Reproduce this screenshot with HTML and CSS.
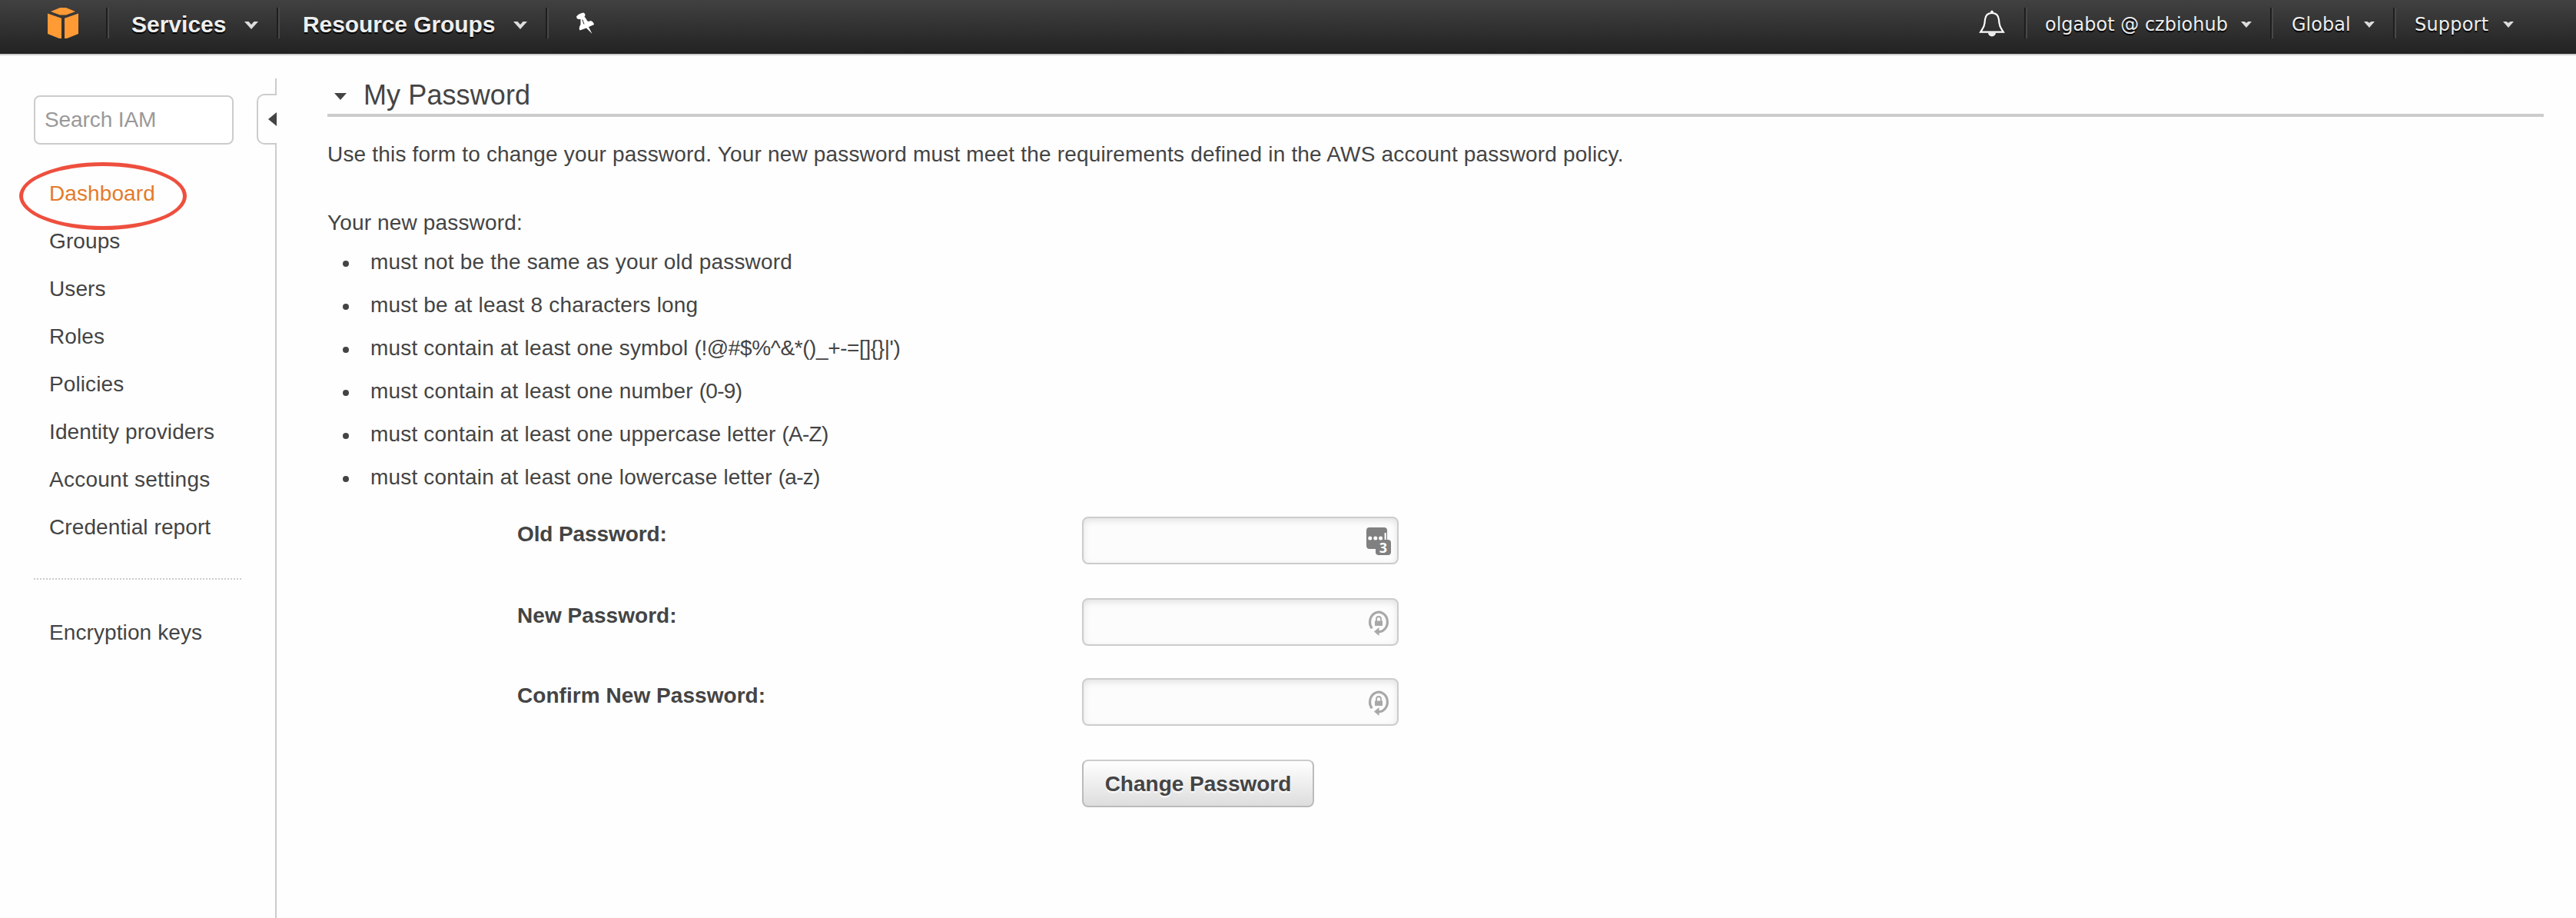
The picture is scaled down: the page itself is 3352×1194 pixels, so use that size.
FILE: index.html
```
<!DOCTYPE html>
<html lang="en">
<head>
<meta charset="utf-8">
<title>IAM Management Console</title>
<link rel="stylesheet" href="styles.css">
</head>
<body>
<header class="nav">
  <a class="nav-logo">
    <svg width="40" height="40" viewBox="0 0 40 40" fill="#ff9a35"><path d="M16 0h8l12 5-12 4.600h-8L4 5z"/><path d="M0 7.500l18 6.200V40h-3L0 34z"/><path d="M40 7.500l-18 6.200V40h3l15-6z"/></svg>
  </a>
  <i class="nav-sep"></i>
  <a class="nav-item nav-services">Services<svg class="caret" width="18" height="10" viewBox="0 0 18 10"><path d="M0 0h5.500l3.500 4 3.500-4H18L9 10z"/></svg></a>
  <i class="nav-sep"></i>
  <a class="nav-item nav-groups">Resource Groups<svg class="caret" width="18" height="10" viewBox="0 0 18 10"><path d="M0 0h5.500l3.500 4 3.500-4H18L9 10z"/></svg></a>
  <i class="nav-sep"></i>
  <a class="nav-pin">
    <svg width="26" height="28" viewBox="0 0 26 28" fill="#fff"><path d="M1 5.500Q4 1.500 10 .500Q12.500 1 12.500 4L11.500 5.500L16 12L20 11Q23.500 12.500 24 16L17 19L21.500 28L14 20.500L5.500 23.500Q3.500 20 6.500 16L6.500 9L3.500 9Q1 8 1 5.500z"/><path d="M8.800 9.500l2.200 6" stroke="#333" stroke-width="1"/></svg>
  </a>
  <a class="nav-bell">
    <svg width="34" height="36" viewBox="0 0 34 36" fill="none" stroke="#fff" stroke-width="2.200"><path d="M17 4C11.500 4 8.500 7.500 8 12.500C7.500 20 6.500 22 2.200 28.600H31.800C27.500 22 26.500 20 26 12.500C25.500 7.500 22.500 4 17 4z"/><path d="M15.500 3a1.500 2 0 0 1 3 0z" fill="#fff" stroke-width="1"/><path d="M12 29.500a5 5 0 0 0 10 0z" fill="#eee" stroke="none"/></svg>
  </a>
  <i class="nav-sep"></i>
  <a class="nav-item nav-small nav-user">olgabot @ czbiohub<svg class="caret" width="14" height="8" viewBox="0 0 14 8"><path d="M0 0h4.500L7 1.800 9.500 0H14L7 8z"/></svg></a>
  <i class="nav-sep"></i>
  <a class="nav-item nav-small nav-region">Global<svg class="caret" width="14" height="8" viewBox="0 0 14 8"><path d="M0 0h4.500L7 1.800 9.500 0H14L7 8z"/></svg></a>
  <i class="nav-sep"></i>
  <a class="nav-item nav-small nav-support">Support<svg class="caret" width="14" height="8" viewBox="0 0 14 8"><path d="M0 0h4.500L7 1.800 9.500 0H14L7 8z"/></svg></a>
</header>
<div class="page">
  <aside class="sidebar">
    <div class="sidebar-body">
      <input class="search" type="text" placeholder="Search IAM">
      <nav class="menu">
        <a class="menu-item active">Dashboard<span class="ring"></span></a>
        <a class="menu-item">Groups</a>
        <a class="menu-item">Users</a>
        <a class="menu-item">Roles</a>
        <a class="menu-item">Policies</a>
        <a class="menu-item">Identity providers</a>
        <a class="menu-item menu-wide">Account settings</a>
        <a class="menu-item">Credential report</a>
        <div class="menu-divider"></div>
        <a class="menu-item">Encryption keys</a>
      </nav>
    </div>
    <div class="rail">
      <div class="rail-top"></div>
      <div class="toggle"><svg width="11" height="18" viewBox="0 0 11 18"><path d="M11 0v18L0 9z" fill="#444"/></svg></div>
      <div class="rail-bottom"></div>
    </div>
  </aside>
  <main class="main">
    <h1 class="title"><svg width="16" height="9" viewBox="0 0 16 9"><path d="M0 0h16L8 9z" fill="#444"/></svg>My Password</h1>
    <p class="intro">Use this form to change your password. Your new password must meet the requirements defined in the AWS account password policy.</p>
    <p class="lead">Your new password:</p>
    <ul class="rules">
      <li>must not be the same as your old password</li>
      <li>must be at least 8 characters long</li>
      <li><span>must contain at least one symbol <span class="symbols">(!@#$%^&amp;*()_+-=[]{}|')</span></span></li>
      <li><span>must contain at least one number <span class="range">(0-9)</span></span></li>
      <li><span>must contain at least one uppercase letter <span class="range">(A-Z)</span></span></li>
      <li><span>must contain at least one lowercase letter <span class="range">(a-z)</span></span></li>
    </ul>
    <form class="form">
      <div class="row">
        <label class="label label-old">Old Password:</label>
        <div class="field">
          <svg width="32" height="36" viewBox="0 0 32 36"><path fill="#808080" d="M4 0h19a4 4 0 0 1 4 4v12h1a4 4 0 0 1 4 4v12a4 4 0 0 1-4 4H16a4 4 0 0 1-4-4v-4H4a4 4 0 0 1-4-4V4a4 4 0 0 1 4-4z"/><g fill="#fff"><circle cx="4.800" cy="14" r="2.500"/><circle cx="11.800" cy="14" r="2.500"/><circle cx="18.600" cy="14" r="2.500"/><path d="M23.600 7h2.200v9h-2.200z"/></g><text x="22" y="33" text-anchor="middle" class="badge">3</text></svg>
        </div>
      </div>
      <div class="row row-mid">
        <label class="label">New Password:</label>
        <div class="field">
          <svg width="32" height="36" viewBox="0 0 32 36"><path d="M7.300 25.300A11.400 12.800 0 1 1 16 29.800" fill="none" stroke="#a8a8a8" stroke-width="3.200"/><path d="M10 29.500l6.500-5.500v11z" fill="#a8a8a8"/><path d="M11 15.500h10V22H11z" fill="#a8a8a8"/><path d="M13 16v-3a3 3 0 0 1 6 0v3" fill="none" stroke="#a8a8a8" stroke-width="1.800"/></svg>
        </div>
      </div>
      <div class="row">
        <label class="label">Confirm New Password:</label>
        <div class="field">
          <svg width="32" height="36" viewBox="0 0 32 36"><path d="M7.300 25.300A11.400 12.800 0 1 1 16 29.800" fill="none" stroke="#a8a8a8" stroke-width="3.200"/><path d="M10 29.500l6.500-5.500v11z" fill="#a8a8a8"/><path d="M11 15.500h10V22H11z" fill="#a8a8a8"/><path d="M13 16v-3a3 3 0 0 1 6 0v3" fill="none" stroke="#a8a8a8" stroke-width="1.800"/></svg>
        </div>
      </div>
      <button class="submit" type="button">Change Password</button>
    </form>
  </main>
</div>
</body>
</html>
```
FILE: styles.css
```
* { box-sizing: border-box; }
body {
  margin: 0;
  background: #fefefe;
  color: #444;
  font: 28px/40px "Liberation Sans", Arial, sans-serif;
}
svg { display: block; flex: none; overflow: visible; }

/* Top bar */
.nav {
  display: flex;
  height: 72px;
  border-bottom: 2px solid #ccc;
  background: linear-gradient(#414141, #222);
}
.nav-logo { width: 138px; padding: 10px 0 0 62px; }
.nav-sep {
  flex: none;
  width: 4px;
  height: 40px;
  margin-top: 10px;
  background: linear-gradient(90deg, #1e1e1e 50%, #484848 50%);
}
.nav-item {
  display: flex;
  justify-content: space-between;
  padding: 0 24px 0 29px;
  color: #eee;
  font-size: 30px;
  font-weight: bold;
  line-height: 64px;
  white-space: nowrap;
  text-shadow: 0 2px 1px #000;
}
.nav-services { width: 218px; }
.nav-groups { width: 346px; padding-left: 30px; letter-spacing: -0.1px; }
.nav-small {
  padding-left: 23px;
  font: 24px/64px "DejaVu Sans", Verdana, sans-serif;
}
.nav-user { width: 316px; }
.nav-region { width: 156px; padding-left: 24px; }
.nav-support { width: 234px; padding-left: 24px; padding-right: 81px; letter-spacing: 0.2px; }
.caret { margin-top: 28px; fill: #ddd; }
.nav-pin { padding: 16px 0 0 35px; }
.nav-bell { margin-left: auto; padding: 13px 25px 0 0; }

/* Sidebar */
.page { display: flex; height: 1122px; }
.sidebar { display: flex; width: 360px; padding: 30px 0 0 44px; }
.sidebar-body { width: 290px; padding-top: 22px; }
.search {
  display: block;
  width: 260px;
  height: 64px;
  padding: 0 12px;
  border: 2px solid #ccc;
  border-radius: 8px;
  background: #fff;
  font: 28px "Liberation Sans", Arial, sans-serif;
  letter-spacing: -0.1px;
}
.search::placeholder { color: #999; opacity: 1; }
.menu { width: 270px; margin-top: 33px; }
.menu-item {
  display: block;
  position: relative;
  height: 62px;
  padding-left: 20px;
  line-height: 62px;
  letter-spacing: 0.1px;
  white-space: nowrap;
}
.menu-wide { letter-spacing: 0.25px; }
.active { color: #e47b2b; }
.ring {
  position: absolute;
  left: -19px;
  top: -10px;
  width: 218px;
  height: 88px;
  border: 5px solid #ee4f3e;
  border-radius: 50%;
}
.menu-divider {
  height: 2px;
  margin: 35px 0 38px;
  background: repeating-linear-gradient(90deg, #ccc 0 2px, transparent 2px 4px);
}
.rail { display: flex; flex-direction: column; width: 26px; }
.rail-top { height: 20px; border-right: 2px solid #ccc; }
.rail-bottom { flex: 1; border-right: 2px solid #ccc; }
.toggle {
  display: flex;
  align-items: center;
  justify-content: flex-end;
  height: 66px;
  border: 2px solid #ccc;
  border-right: 0;
  border-radius: 10px 0 0 10px;
}

/* Content */
.main { flex: 1; padding: 30px 42px 0 66px; }
.title {
  display: flex;
  height: 50px;
  margin: 0;
  padding-left: 9px;
  gap: 22px;
  border-bottom: 4px solid #ccc;
  font-size: 36px;
  font-weight: normal;
  line-height: 44px;
  letter-spacing: 0.1px;
}
.title svg { margin-top: 19px; }
.intro { margin: 29px 0 0; letter-spacing: 0.18px; }
.lead { margin: 49px 0 0; letter-spacing: 0.15px; }
.rules { margin: 3px 0 0; padding: 0 0 0 20px; list-style: none; }
.rules li {
  display: flex;
  align-items: center;
  gap: 28px;
  line-height: 56px;
  letter-spacing: 0.18px;
}
.rules li::before {
  content: "";
  width: 8px;
  height: 8px;
  margin-top: 3px;
  border-radius: 50%;
  background: #444;
}
.rules .symbols { letter-spacing: -0.4px; }
.rules .range { letter-spacing: -0.7px; }
.form { margin: 23px 0 0 246px; }
.row { display: flex; height: 62px; margin-bottom: 44px; }
.row-mid { margin-bottom: 42px; }
.label {
  width: 736px;
  padding: 3px 0 0 1px;
  font-weight: bold;
  letter-spacing: 0.05px;
}
.label-old { letter-spacing: -0.1px; }
.field {
  display: flex;
  justify-content: flex-end;
  width: 412px;
  padding: 12px 8px 0 0;
  border: 2px solid #ccc;
  border-radius: 8px;
  background: #fcfcfc;
  box-shadow: inset 0 3px 8px rgba(0, 0, 0, 0.11);
}
.badge { fill: #fff; font: bold 18px/1 "Open Sans", sans-serif; }
.submit {
  display: block;
  width: 302px;
  height: 62px;
  margin-left: 736px;
  padding: 1px 0 0;
  border: 2px solid #bbb;
  border-top-color: #ccc;
  border-radius: 8px;
  background: linear-gradient(#fff, #ddd);
  color: #444;
  font: bold 28px "Liberation Sans", Arial, sans-serif;
  text-shadow: 0 2px 2px #fff;
}
```
